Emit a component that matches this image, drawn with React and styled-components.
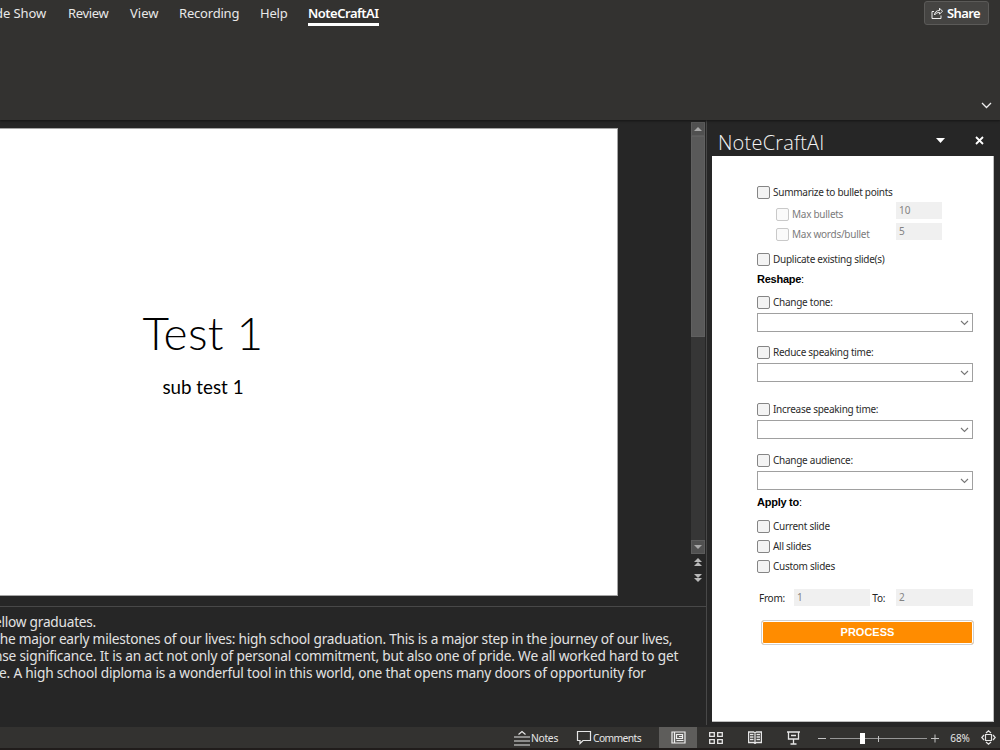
import styled, { createGlobalStyle } from "styled-components";

const GlobalStyle = createGlobalStyle`
  * {
    box-sizing: border-box;
  }

  body {
    margin: 0;
    overflow: hidden;
    background: #262626;
    font-family: "Noto Sans", "Open Sans", sans-serif;
  }
`;

const Window = styled.div`
  width: 1000px;
  height: 750px;
  display: flex;
  flex-direction: column;
  overflow: hidden;
  background: #262626;
`;

/* ribbon */

const Ribbon = styled.header`
  height: 120px;
  flex: none;
  display: flex;
  flex-direction: column;
  justify-content: space-between;
  background: #333230;
  box-shadow: 0 1px 2px #151515;
  z-index: 1;
`;

const TabRow = styled.div`
  display: flex;
  justify-content: space-between;
  padding: 1px 11px 0 0;
`;

const Tabs = styled.nav`
  display: flex;
  margin-left: -5px;
`;

const Tab = styled.div`
  width: ${(props) => props.$width}px;
  height: 25px;
  margin-right: ${(props) => props.$gap || 0}px;
  line-height: 25px;
  font-size: 13px;
  font-weight: ${(props) => (props.$active ? 600 : 400)};
  letter-spacing: ${(props) => props.$spacing || 0}px;
  color: ${(props) => (props.$active ? "#fff" : "#e8e8e8")};
  border-bottom: ${(props) => (props.$active ? "3px solid #fff" : "none")};
  white-space: nowrap;
`;

const ShareButton = styled.button`
  width: 65px;
  height: 24px;
  display: flex;
  align-items: center;
  gap: 4px;
  padding: 0 0 0 6px;
  background: #454442;
  border: 1px solid #5b5a58;
  border-radius: 3px;
  color: #fff;
  font-family: inherit;
  font-size: 13px;
  font-weight: 600;
  letter-spacing: -0.6px;
`;

const CollapseRow = styled.div`
  display: flex;
  justify-content: flex-end;
  padding: 0 8px 11px 0;
`;

/* editor */

const Workspace = styled.main`
  height: 607px;
  flex: none;
  display: flex;
`;

const Editor = styled.section`
  width: 707px;
  height: 605px;
  flex: none;
  display: flex;
  flex-direction: column;
  border-right: 1px solid #484848;
`;

const SlideArea = styled.div`
  height: 486px;
  display: flex;
  justify-content: space-between;
  padding-top: 2px;
`;

const Slide = styled.div`
  width: 618px;
  height: 468px;
  margin-top: 6px;
  padding: 172px 211px 0 0;
  display: flex;
  flex-direction: column;
  align-items: center;
  background: #fff;
  border: 1px solid #a5a5a5;
  border-left: none;
  color: #000;
`;

const SlideTitle = styled.h1`
  margin: 0;
  font-family: Lato, sans-serif;
  font-size: 46px;
  line-height: 64px;
  font-weight: 300;
  letter-spacing: 0.3px;
  white-space: nowrap;
`;

const SlideSubtitle = styled.p`
  margin: 7px 0 0;
  font-size: 18.8px;
  line-height: 30px;
  font-family: Lato, sans-serif;
  white-space: nowrap;
`;

const ScrollTrack = styled.div`
  width: 14px;
  height: 432px;
  margin-right: 1px;
  display: flex;
  flex-direction: column;
  background: #363636;
`;

const ScrollColumn = styled.div`
  display: flex;
  flex-direction: column;
`;

const ScrollButton = styled.div`
  height: 14px;
  display: flex;
  align-items: center;
  justify-content: center;
  background: #505050;
  border: 1px solid #5c5c5c;
`;

const ScrollThumb = styled.div`
  height: 201px;
  margin-bottom: auto;
  background: #595959;
  border: 1px solid #606060;
`;

const PageJump = styled.div`
  height: 16px;
  width: 14px;
  display: flex;
  align-items: center;
  justify-content: center;
`;

const Notes = styled.div`
  flex: 1;
  padding-top: 6px;
  border-top: 1px solid #484848;
`;

const NoteLine = styled.div`
  height: 17px;
  margin-left: ${(props) => props.$left}px;
  line-height: 17px;
  font-size: 13.7px;
  letter-spacing: ${(props) => props.$spacing}px;
  color: #e2e2e2;
  white-space: nowrap;
`;

/* task pane */

const Pane = styled.aside`
  width: 293px;
  flex: none;
  padding: 2px 6px 5px 5px;
  display: flex;
  flex-direction: column;
`;

const PaneHeader = styled.div`
  height: 34px;
  display: flex;
  align-items: center;
  padding: 7px 10px 0 6px;
`;

const PaneTitle = styled.h2`
  flex: 1;
  margin: 0;
  font-family: "Open Sans", sans-serif;
  font-size: 20px;
  font-weight: 300;
  letter-spacing: 0.2px;
  line-height: 28px;
  color: #f4f4f4;
`;

const CaretIcon = styled.svg`
  margin: -5px 30px 0 0;
`;

const CloseIcon = styled.svg`
  margin-top: -5px;
`;

const PaneBody = styled.div`
  height: 566px;
  padding: 26px 20px 0 45px;
  background: #fff;
  border: 1px solid #bdbdbd;
  border-width: 0 1px 1px 0;
  color: #252525;
`;

const CheckRow = styled.label`
  height: 20px;
  display: flex;
  align-items: center;
  gap: 3px;
  margin-top: ${(props) => props.$top || 0}px;
  font-size: 10px;
  letter-spacing: -0.27px;
  line-height: 20px;
  white-space: nowrap;
  color: ${(props) => (props.$disabled ? "#7b7b7b" : "#2b2b2b")};
`;

const Box = styled.span`
  width: 13px;
  height: 13px;
  margin-top: 1px;
  flex: none;
  border: 1px solid ${(props) => (props.$disabled ? "#c9c9c9" : "#858585")};
  border-radius: 2px;
  background: ${(props) => (props.$disabled ? "#fafafa" : "#f3f3f3")};
`;

const SubOptions = styled.div`
  height: 47px;
  display: flex;
  justify-content: space-between;
  padding: 0 31px 0 19px;
`;

const SubChecks = styled.div`
  padding-top: 2px;
`;

const SubFields = styled.div`
  display: flex;
  flex-direction: column;
  gap: 4px;
`;

const Field = styled.div`
  width: ${(props) => props.$width}px;
  height: 17px;
  padding-left: 3px;
  background: #f0f0f0;
  color: #838383;
  font-size: 10px;
  line-height: 17px;
`;

const Heading = styled.div`
  height: 20px;
  margin-top: ${(props) => props.$top || 0}px;
  font-family: "Liberation Sans", sans-serif;
  font-size: 11px;
  font-weight: 700;
  letter-spacing: -0.25px;
  line-height: 20px;
  color: #000;
`;

const Colon = styled.span`
  font-weight: 400;
`;

const Select = styled.div`
  width: 216px;
  height: 19px;
  margin-top: 1px;
  display: flex;
  align-items: center;
  justify-content: flex-end;
  padding-right: 3px;
  border: 1px solid #a0a0a0;
  background: #fff;
`;

const RangeRow = styled.div`
  display: flex;
  height: 17px;
  margin-top: 13px;
  padding-left: 2px;
`;

const RangeLabel = styled.span`
  width: ${(props) => props.$width}px;
  font-size: 10px;
  letter-spacing: -0.25px;
  line-height: 19px;
`;

const ProcessButton = styled.button`
  width: 213px;
  height: 25px;
  margin: 14px 0 0 4px;
  padding: 0 0 2px;
  display: flex;
  align-items: center;
  justify-content: center;
  background: #ff8c00;
  border: 1px solid #d0d0d0;
  border-radius: 3px;
  box-shadow: inset 0 0 0 1px #fff;
  color: #fff;
  font-family: "Liberation Sans", sans-serif;
  font-size: 11px;
  font-weight: 700;
`;

/* status bar */

const StatusBar = styled.footer`
  height: 23px;
  flex: none;
  display: flex;
  align-items: center;
  padding-left: 514px;
  background: #333230;
  border-bottom: 2px solid #201c1b;
  color: #e6e6e6;
  font-size: 10.3px;
`;

const StatusItem = styled.div`
  width: ${(props) => props.$width}px;
  height: 21px;
  flex: none;
  display: flex;
  align-items: center;
  gap: 1px;
  letter-spacing: ${(props) => props.$spacing}px;
`;

const ViewButton = styled.div`
  width: 38px;
  height: 21px;
  flex: none;
  display: flex;
  align-items: center;
  justify-content: center;
  background: ${(props) => (props.$active ? "#5e5d5b" : "transparent")};
`;

const ViewButtons = styled.div`
  display: flex;
  gap: 0.4px;
`;

const Zoom = styled.div`
  display: flex;
  align-items: center;
  margin-left: 6px;
`;

const ZoomValue = styled.span`
  width: 31px;
  margin-left: 11px;
  font-size: 10px;
`;

const tabs = [
  { label: "de Show", width: 51, gap: 22, spacing: -0.1 },
  { label: "Review", width: 41, gap: 21, spacing: -0.35 },
  { label: "View", width: 28, gap: 21 },
  { label: "Recording", width: 60, gap: 21, spacing: -0.2 },
  { label: "Help", width: 27, gap: 21, spacing: -0.2 },
  { label: "NoteCraftAI", width: 71, active: true, spacing: -0.5 },
];

const notes = [
  { text: "ellow graduates.", left: -6, spacing: -0.25 },
  {
    text: "the major early milestones of our lives: high school graduation. This is a major step in the journey of our lives,",
    left: -5,
    spacing: -0.23,
  },
  {
    text: "nse significance. It is an act not only of personal commitment, but also one of pride. We all worked hard to get",
    left: -6,
    spacing: -0.2,
  },
  {
    text: "e. A high school diploma is a wonderful tool in this world, one that opens many doors of opportunity for",
    left: -1,
    spacing: -0.19,
  },
];

function Check({ children, disabled, top }) {
  return (
    <CheckRow $disabled={disabled} $top={top}>
      <Box $disabled={disabled} />
      {children}
    </CheckRow>
  );
}

function Dropdown() {
  return (
    <Select>
      <svg width="9" height="6" fill="none" stroke="#777" strokeWidth="1.1">
        <path d="M1 1l3.5 3.5L8 1" />
      </svg>
    </Select>
  );
}

function TaskPane() {
  return (
    <Pane>
      <PaneHeader>
        <PaneTitle>NoteCraftAI</PaneTitle>
        <CaretIcon width="9" height="5" fill="#fff">
          <path d="M0 0h9L4.5 5z" />
        </CaretIcon>
        <CloseIcon width="9" height="9" stroke="#fff" strokeWidth="1.8">
          <path d="M1 1l7 7M8 1L1 8" />
        </CloseIcon>
      </PaneHeader>
      <PaneBody>
        <Check>Summarize to bullet points</Check>
        <SubOptions>
          <SubChecks>
            <Check disabled>Max bullets</Check>
            <Check disabled>Max words/bullet</Check>
          </SubChecks>
          <SubFields>
            <Field $width={46}>10</Field>
            <Field $width={46}>5</Field>
          </SubFields>
        </SubOptions>
        <Check>Duplicate existing slide(s)</Check>
        <Heading>
          Reshape<Colon>:</Colon>
        </Heading>
        <Check top={3}>Change tone:</Check>
        <Dropdown />
        <Check top={10}>Reduce speaking time:</Check>
        <Dropdown />
        <Check top={17}>Increase speaking time:</Check>
        <Dropdown />
        <Check top={11}>Change audience:</Check>
        <Dropdown />
        <Heading $top={2}>
          Apply to<Colon>:</Colon>
        </Heading>
        <Check top={4}>Current slide</Check>
        <Check>All slides</Check>
        <Check>Custom slides</Check>
        <RangeRow>
          <RangeLabel $width={35}>From:</RangeLabel>
          <Field $width={76}>1</Field>
          <RangeLabel $width={26}>&nbsp;To:</RangeLabel>
          <Field $width={77}>2</Field>
        </RangeRow>
        <ProcessButton>PROCESS</ProcessButton>
      </PaneBody>
    </Pane>
  );
}

function Status() {
  return (
    <StatusBar>
      <StatusItem $width={62} $spacing={-0.3}>
        <svg width="16" height="16" fill="none" stroke="#e6e6e6" strokeWidth="1.2">
          <path d="M4.5 4.5L8 1.5l3.5 3M0 7h16M0 11h16M0 15h16" />
        </svg>
        Notes
      </StatusItem>
      <StatusItem $width={83} $spacing={-0.6}>
        <svg width="16" height="15" fill="none" stroke="#e6e6e6" strokeWidth="1.2">
          <path d="M1.5 1.5h13v9H7l-3 3v-3H1.5z" />
        </svg>
        Comments
      </StatusItem>
      <ViewButtons>
        <ViewButton $active>
          <svg width="15" height="13" fill="none" stroke="#eee" strokeWidth="1.2">
            <path d="M1 1h13v11H1zM3.5 1v11M5.5 3.5h6v4h-6zM5.5 9.5h7M8 5.5h3" />
          </svg>
        </ViewButton>
        <ViewButton>
          <svg width="14" height="12" fill="none" stroke="#e6e6e6" strokeWidth="1.3">
            <path d="M.7.7h4.6v3.6H.7zM8.7.7h4.6v3.6H8.7zM.7 7.7h4.6v3.6H.7zM8.7 7.7h4.6v3.6H8.7z" />
          </svg>
        </ViewButton>
        <ViewButton>
          <svg width="14" height="13" fill="none" stroke="#e6e6e6" strokeWidth="1.3">
            <path d="M.6 1h5L7 2l1.4-1h5v10.5h-5l-1.4 1-1.4-1h-5zM7 2v10M2 3.5h3.5M2 6h3.5M2 8.5h3.5M8.5 3.5H12M8.5 6H12M8.5 8.5H12" />
          </svg>
        </ViewButton>
        <ViewButton>
          <svg width="13" height="14" fill="none" stroke="#e6e6e6" strokeWidth="1.3">
            <path d="M0 1h13M1.5 1v7h10V1M4 4.5h5M6.5 8v5M3.5 13h6" />
          </svg>
        </ViewButton>
      </ViewButtons>
      <Zoom>
        <svg width="121" height="14" stroke="#c4c4c4">
          <path d="M0 7.5h8M113 7.5h8M117 3.5v8" />
          <path d="M12 7.5h97" stroke="#969696" />
          <path d="M60.5 5v6" />
          <path d="M42 2h5v11h-5z" fill="#fff" stroke="none" />
        </svg>
        <ZoomValue>68%</ZoomValue>
        <svg width="15" height="15" fill="none" stroke="#e6e6e6" strokeWidth="1.2">
          <path d="M4.5 4.5h6v6h-6zM5 3l2.5-2.2L10 3M5 12l2.5 2.2L10 12M3 5L.8 7.5 3 10M12 5l2.2 2.5L12 10" />
        </svg>
      </Zoom>
    </StatusBar>
  );
}

export default function App() {
  return (
    <Window>
      <GlobalStyle />
      <Ribbon>
        <TabRow>
          <Tabs>
            {tabs.map((tab) => (
              <Tab
                key={tab.label}
                $width={tab.width}
                $gap={tab.gap}
                $spacing={tab.spacing}
                $active={tab.active}
              >
                {tab.label}
              </Tab>
            ))}
          </Tabs>
          <ShareButton>
            <svg width="12" height="12" fill="none" stroke="#f0f0f0" strokeWidth="1">
              <path d="M3 4.5H1v7h9v-3M3.500 8c.3-3 2-4.500 5-4.500V1.200l3 3-3 3V5.500c-2 0-3.500.5-5 2.500z" />
            </svg>
            Share
          </ShareButton>
        </TabRow>
        <CollapseRow>
          <svg width="11" height="7" fill="none" stroke="#eee" strokeWidth="1.3">
            <path d="M1 1l4.5 4.5L10 1" />
          </svg>
        </CollapseRow>
      </Ribbon>
      <Workspace>
        <Editor>
          <SlideArea>
            <Slide>
              <SlideTitle>Test 1</SlideTitle>
              <SlideSubtitle>sub test 1</SlideSubtitle>
            </Slide>
            <ScrollColumn>
              <ScrollTrack>
                <ScrollButton>
                  <svg width="8" height="4" fill="#a8a8a8">
                    <path d="M0 4l4-4 4 4z" />
                  </svg>
                </ScrollButton>
                <ScrollThumb />
                <ScrollButton>
                  <svg width="8" height="4" fill="#a8a8a8">
                    <path d="M0 0l4 4 4-4z" />
                  </svg>
                </ScrollButton>
              </ScrollTrack>
              <PageJump>
                <svg width="8" height="8" fill="#b8b8b8">
                  <path d="M0 4l4-4 4 4zM0 8l4-4 4 4z" />
                </svg>
              </PageJump>
              <PageJump>
                <svg width="8" height="8" fill="#b8b8b8">
                  <path d="M0 0l4 4 4-4zM0 4l4 4 4-4z" />
                </svg>
              </PageJump>
            </ScrollColumn>
          </SlideArea>
          <Notes>
            {notes.map((line) => (
              <NoteLine key={line.text} $left={line.left} $spacing={line.spacing}>
                {line.text}
              </NoteLine>
            ))}
          </Notes>
        </Editor>
        <TaskPane />
      </Workspace>
      <Status />
    </Window>
  );
}
